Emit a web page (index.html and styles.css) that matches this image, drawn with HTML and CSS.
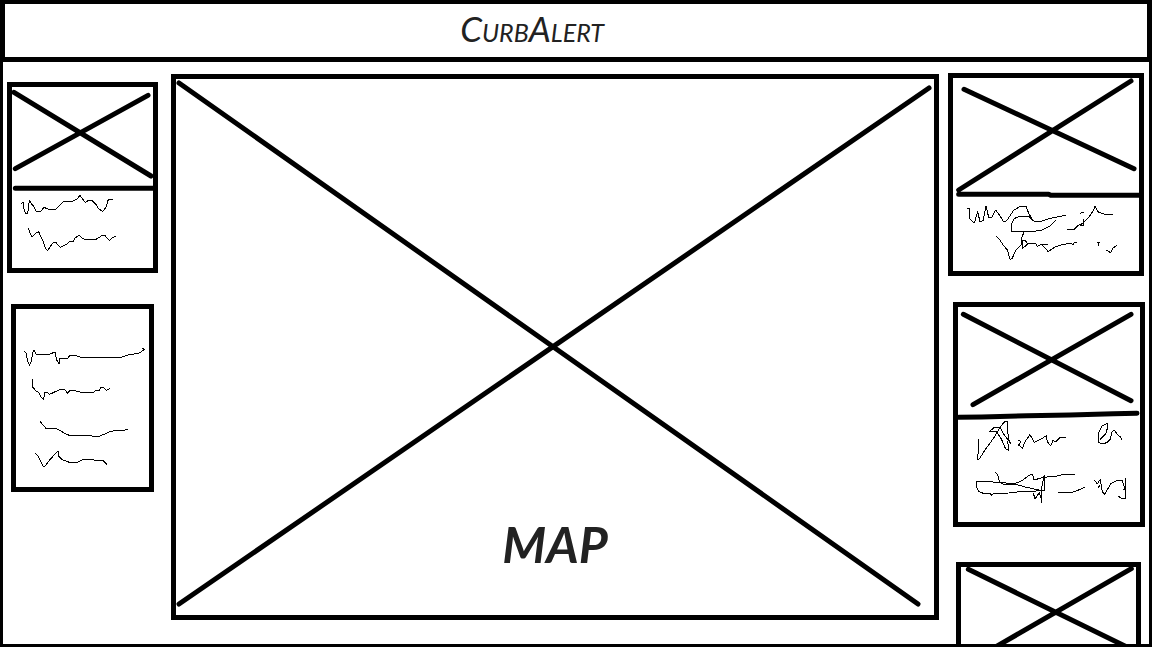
FILE: index.html
```html
<!DOCTYPE html>
<html lang="en">
<head>
<meta charset="utf-8">
<meta name="viewport" content="width=device-width, initial-scale=1">
<title>CurbAlert</title>
<link rel="stylesheet" href="styles.css">
</head>
<body>
<header class="site-header"><h1 class="brand">CurbAlert</h1></header>
<main class="board">
  <aside class="column column-left">
    <article class="card card-listing">
      <svg class="sketch" viewBox="36 51 423 543" aria-hidden="true">
        <path class="thick" d="M42 67L453 318M444 76L46 296M46 355H459"/>
        <path class="thin" d="M64 400L70 396L72 417L77 430L83 431L86 405L89 391L94 402L101 408L108 424L122 425L132 412L146 418L166 418L178 408L188 396L218 394L232 386L240 376L248 387L256 398L265 391L278 393L289 404L293 414L308 425L319 410L325 388L339 388"/>
        <path class="thin" d="M85 475L90 490L96 501L104 492L116 485L124 503L130 516L136 535L143 542L151 530L158 519L168 517L174 525L182 532L198 524L210 514L219 516L226 503L238 496L250 507L288 508L304 498L314 496L328 511L336 504L347 498"/>
      </svg>
    </article>
    <article class="card card-notes">
      <svg class="sketch" viewBox="48 42 399 534" aria-hidden="true">
        <path class="thin" d="M72 168L79 176L82 196L89 211L95 195L98 172L102 166L108 178L146 178L166 171L169 193L178 207L180 190L204 190L209 181L226 181L244 187L362 187L384 180L418 174L431 165L427 160L435 163"/>
        <path class="thin" d="M97 252V275L108 288L115 291L121 303L131 314L134 292L142 292L149 298L166 290L181 283L194 284L203 295L210 286L226 287L242 292L281 292L286 287L298 286L303 277L311 277L319 286L330 280"/>
        <path class="thin" d="M120 379L127 388L138 400L168 401L183 408L193 415L208 421L272 421L278 424L297 424L314 417L333 409L355 406L376 405L383 403"/>
        <path class="thin" d="M106 474L115 484L122 500L132 517L145 500L162 480L174 469L175 482L187 494L208 502L231 502L249 493H278L287 497L309 497L320 508"/>
      </svg>
    </article>
  </aside>

  <figure class="map">
    <svg class="sketch" viewBox="176 79 758 536" aria-hidden="true">
      <path class="map-cross" d="M179 83L918 604M929 88L179 604"/>
    </svg>
    <figcaption class="map-label">MAP</figcaption>
  </figure>

  <aside class="column column-right">
    <article class="card card-first">
      <svg class="sketch" viewBox="39 39 558 579" aria-hidden="true">
        <path class="thick" d="M72 73L582 311M573 48L56 375M56 388H326L332 391H597"/>
        <path class="thin" d="M82 430H87L90 462L103 474L113 440L120 470L129 467L138 422L146 457L156 456L167 435L180 452L191 471L201 466L220 437L237 426L258 424L267 447L280 468L302 469L330 460L378 451"/>
        <path class="thin" d="M276 463L266 454H238L222 461L214 478V499H281L306 495L330 483L348 466"/>
        <path class="thin" d="M382 493H402L414 482L430 474M431 463L432 480L420 481L434 470L446 457L459 438L465 424L475 441L495 448H519M421 445L433 441"/>
        <path class="thin" d="M169 513L179 524L191 542L202 555L210 583L216 581L227 557L243 540L246 515L253 500M246 526L248 550L263 537L256 526L248 526M263 535L288 536L292 545L304 537H323M304 537L310 544L325 560L343 547L366 539L395 534L398 540L403 533H411M471 532L478 533L474 542M498 555L512 563L520 548L531 541"/>
      </svg>
    </article>
    <article class="card card-second">
      <svg class="sketch" viewBox="54 51 546 645" aria-hidden="true">
        <path class="thick" d="M70 73L573 332M573 73L99 344M56 382L125 381L260 377L390 375L520 371L591 370"/>
        <path class="thin" d="M115 447V486L111 509L118 507L135 480L161 444L180 412L193 396L203 394V423L206 449L212 460L203 448L189 430L181 413L165 411L148 424L170 426L184 447L196 475L206 482L203 453"/>
        <path class="thin" d="M236 451L243 454L236 465L247 475L256 453L270 434L283 457L304 447L319 437L322 455L332 468L339 451L347 456L361 442H378"/>
        <path class="thin" d="M480 448L498 430L502 415L503 400L487 407L475 430V457L486 462L500 458L510 449L516 426L523 420L533 435L542 441L545 450"/>
        <path class="thin" d="M165 547L173 553L178 575L190 582H222L246 572L264 558L278 552L281 570L312 562L352 558L371 553H405"/>
        <path class="thin" d="M305 602L260 592L222 582L182 577L109 574V591L117 605L130 610L149 609L153 616L162 610L206 609L239 605L313 602V555L306 588L304 638M280 609L285 627L298 608L302 623M354 607H397L418 599L434 591"/>
        <path class="thin" d="M462 570L472 581L481 568L484 590L488 607L495 613L503 597L513 581L532 571L547 572L554 595L551 600M557 564V626L546 626L534 618M474 592L478 588"/>
      </svg>
    </article>
    <article class="card card-third">
      <svg class="sketch" viewBox="63 51 525 645" aria-hidden="true">
        <path class="thick" d="M85 58L573 297M574 56L90 335M66 370H588"/>
      </svg>
    </article>
  </aside>
</main>
</body>
</html>
```
FILE: styles.css
```css
* {
  box-sizing: border-box;
}

body {
  margin: 0;
  height: 100vh;
  display: flex;
  flex-direction: column;
  overflow: hidden;
  background: #fff;
  color: #222;
  font-family: Lato, "Open Sans", sans-serif;
}

.site-header {
  flex: none;
  padding: 6px 88px 11px 0;
  border: solid #000;
  border-width: 4px 5px 5px;
  text-align: center;
}

.brand {
  margin: 0;
  font-size: 35px;
  line-height: 36px;
  font-weight: 400;
  font-style: italic;
  font-variant-caps: small-caps;
}

.board {
  flex: 1;
  min-height: 0;
  display: grid;
  grid-template-columns: 155px 1fr 197px;
  column-gap: 9px;
  align-items: start;
  padding: 0 4px;
  border: solid #000;
  border-width: 0 3px 3px;
  overflow: hidden;
}

.column {
  display: flex;
  flex-direction: column;
}

.column-left {
  padding-top: 20px;
  gap: 31px;
}

.column-right {
  padding-top: 11px;
}

.card,
.map {
  border: 5px solid #000;
}

.card-listing {
  margin-right: 4px;
}

.card-notes {
  margin: 0 8px 0 4px;
}

.card-first {
  margin: 0 1px 26px 0;
}

.card-second {
  margin: 0 0 35px 5px;
}

.card-third {
  margin: 0 4px 0 8px;
}

.map {
  position: relative;
  margin: 12px 0 0;
}

.map-label {
  position: absolute;
  inset: auto 0 8%;
  text-align: center;
  font-size: 50px;
  line-height: 56px;
  font-weight: 700;
  font-style: italic;
}

.sketch {
  display: block;
  width: 100%;
  height: auto;
}

.thick,
.thin,
.map-cross {
  fill: none;
  stroke: #000;
  stroke-linecap: round;
  stroke-linejoin: round;
}

.thick {
  stroke-width: 15;
}

.thin {
  stroke-width: 3;
  shape-rendering: crispEdges;
}

.map-cross {
  stroke-width: 5;
}
```
